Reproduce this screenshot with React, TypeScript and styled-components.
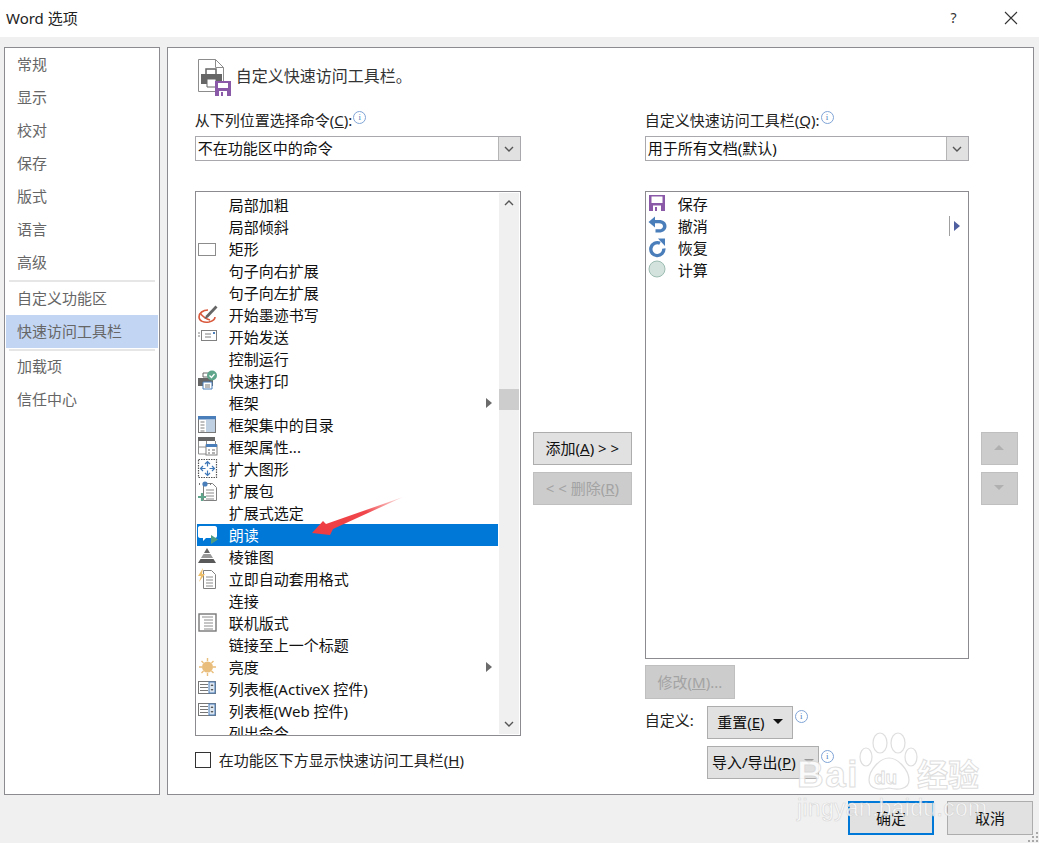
import React from "react";
import styled, { createGlobalStyle } from "styled-components";

const FONT = `"Noto Sans", "Noto Sans CJK SC", sans-serif`;

const GlobalStyle = createGlobalStyle`
  html, body {
    margin: 0;
    padding: 0;
    background: #f0f0f0;
  }
  * {
    box-sizing: border-box;
  }
`;

type IconName =
  | "rect" | "ink" | "send" | "quickprint" | "toc" | "frameprops" | "enlarge"
  | "pack" | "speak" | "pyramid" | "autoformat" | "online" | "sun" | "listbox"
  | "save" | "undo" | "redo" | "calc";

const Glyph: React.FC<{ name: IconName }> = ({ name }) => {
  switch (name) {
    case "rect":
      return <rect x="1.5" y="5.5" width="17" height="12" fill="#fff" stroke="#8c8c8c" />;
    case "ink":
      return (
        <>
          <path d="M11 6C6 6 2 9 2 13c0 4 5 6 10 5 4-1 6-3 6-5" fill="none" stroke="#d9593d" strokeWidth="1.6" />
          <path d="M3 9c3 4 6 6 10 7" fill="none" stroke="#d9593d" strokeWidth="1.4" />
          <path d="M9 11.500L18.500 1.500l2 2-9.500 10-3.500 1.500z" fill="#666" />
        </>
      );
    case "send":
      return (
        <>
          <rect x="4.5" y="4.5" width="15" height="10" fill="#fff" stroke="#808080" />
          <path d="M1 7h2M1 10h2M8 8h6M8 11h6" stroke="#808080" />
          <rect x="16" y="6" width="2" height="2" fill="#4a7ebb" />
        </>
      );
    case "quickprint":
      return (
        <>
          <path d="M6 3h8v4H6z" fill="#fff" stroke="#666" />
          <path d="M1 8h15v8H1z" fill="#666" />
          <path d="M6 12h9v7H6z" fill="#fff" stroke="#4a7ebb" />
          <path d="M8 15h5M8 17h5" stroke="#777" />
          <circle cx="15" cy="5.5" r="5" fill="#5fa58c" />
          <path d="M12.5 5.500l2 2 3-3.500" fill="none" stroke="#fff" strokeWidth="1.3" />
        </>
      );
    case "toc":
      return (
        <>
          <rect x="1.5" y="2.5" width="17" height="16" fill="#fff" stroke="#777" />
          <rect x="1" y="2" width="18" height="3.5" fill="#4a7ebb" />
          <rect x="9" y="6" width="9" height="12" fill="#bfd0e3" />
          <path d="M3.5 8h4M3.5 11h4M3.5 14h4M3.5 17h4" stroke="#7f7f7f" />
        </>
      );
    case "frameprops":
      return (
        <>
          <rect x="1" y="1" width="17" height="4" fill="#666" />
          <path d="M1.5 5v13h17V5M1.5 11h8M9.5 5v13" fill="#fff" stroke="#8c8c8c" />
          <rect x="9" y="9" width="11" height="10" fill="#fff" stroke="#808080" />
          <rect x="9" y="8" width="11" height="3" fill="#4a7ebb" />
          <path d="M11 14h2M15 14h3M11 17h2M15 17h3" stroke="#666" />
        </>
      );
    case "enlarge":
      return (
        <>
          <rect x="1.5" y="1.5" width="18" height="18" fill="#fff" stroke="#555" strokeDasharray="1.5 1" strokeWidth="1.2" />
          <path d="M10.5 3.500v5M8 6l2.500-2.500L13 6M10.500 17.500v-5M8 15l2.500 2.500L13 15M3.500 10.500h5M6 8l-2.500 2.500L6 13M17.500 10.500h-5M15 8l2.500 2.500L15 13" fill="none" stroke="#3f78b8" strokeWidth="1.2" />
        </>
      );
    case "pack":
      return (
        <>
          <path d="M6.5 3.5h9l4 4v13h-13z" fill="#fff" stroke="#808080" />
          <path d="M9 10h8M9 13h8M9 16h8M9 19h8" stroke="#8c8c8c" />
          <circle cx="8" cy="4" r="2.6" fill="#4a7ebb" />
          <path d="M2 4h1M13 4h1" stroke="#777" strokeWidth="2" />
          <path d="M5 13v8M1 17h8" stroke="#5fa58c" strokeWidth="2.2" />
        </>
      );
    case "speak":
      return (
        <>
          <path d="M1 4c0-1 .5-2 2-2h15c1 0 2 1 2 2v8c0 1-1 2-2 2H9l-3 3v-3H3c-1 0-2-1-2-2z" fill="#fff" />
          <path d="M14 11l7 4.500-7 4.500z" fill="#4f9c84" />
        </>
      );
    case "pyramid":
      return (
        <>
          <path d="M10 2l3 5H7z" fill="#666" />
          <path d="M6.5 8h7l2.500 4H4z" fill="#999" />
          <path d="M3.5 13h13l2.500 4H1z" fill="#595959" />
        </>
      );
    case "autoformat":
      return (
        <>
          <path d="M6.5 2.5h8l4 4v14h-12z" fill="#fff" stroke="#808080" />
          <path d="M9 9h7M9 12h7M9 15h7M9 18h7" stroke="#8c8c8c" />
          <path d="M6 0L1 8h3l-2 6 6-8H5z" fill="#edbe6a" />
        </>
      );
    case "online":
      return (
        <>
          <rect x="2" y="2" width="17" height="17" fill="#fff" stroke="#777" strokeWidth="1.4" />
          <path d="M5 5h11M7 8h9M7 11h9M7 14h9M7 17h9" stroke="#8c8c8c" />
        </>
      );
    case "sun":
      return (
        <>
          <circle cx="10.5" cy="11" r="5.5" fill="#e9bd7b" />
          <path d="M10.5 2v3M10.5 17v3M2 11h3M16 11h3M4.5 5l2 2M14.5 15l2 2M16.5 5l-2 2M6.5 15l-2 2" stroke="#e9bd7b" strokeWidth="1.4" />
        </>
      );
    case "listbox":
      return (
        <>
          <rect x="1.5" y="3.5" width="17" height="12" fill="#fff" stroke="#777" />
          <path d="M3 6.500h8M3 9.500h8M3 12.500h8" stroke="#777" />
          <rect x="12" y="4" width="6" height="11" fill="#dce6f1" stroke="#4a7ebb" />
          <path d="M13.5 8l1.500-2 1.500 2zM13.5 11l1.500 2 1.500-2z" fill="#555" />
        </>
      );
    case "save":
      return (
        <>
          <path d="M1 1h16v16H1z" fill="#8a5aa8" />
          <rect x="3.5" y="2.5" width="11" height="6.5" fill="#fff" />
          <rect x="5" y="11.5" width="8" height="5.5" fill="#fff" />
          <rect x="7" y="13" width="2" height="4" fill="#8a5aa8" />
        </>
      );
    case "undo":
      return (
        <path d="M0.5 6l6.500-5.500v3.500h4c4.500 0 7.500 2.500 7.500 6.200s-3 6.300-7.500 6.300H7.500v-3.200H11c2.400 0 4-1.100 4-3.100S13.400 7.200 11 7.200H7V11.500z" fill="#4a7ebb" />
      );
    case "redo":
      return (
        <>
          <path d="M12 5.200A6.500 6.500 0 1 0 15.800 10.500" fill="none" stroke="#4a7ebb" strokeWidth="3.400" />
          <path d="M10 0.500l7 0v7.500z" fill="#4a7ebb" />
        </>
      );
    case "calc":
      return <circle cx="9" cy="9" r="8" fill="#d3e2dc" stroke="#9dbdb2" />;
  }
};

const Shell = styled.div`
  position: relative;
  width: 1039px;
  height: 843px;
  overflow: hidden;
  display: flex;
  flex-direction: column;
  background: #f0f0f0;
  color: #111;
  font-family: ${FONT};
  font-size: 15px;
`;

const TitleBar = styled.div`
  height: 37px;
  flex: none;
  display: flex;
  align-items: center;
  background: #fff;
  padding: 0 0 2px 6px;
`;

const TitleText = styled.div`
  flex: 1;
  font-size: 15px;
  color: #222;
`;

const TitleButton = styled.div`
  width: 57px;
  font-size: 14px;
  display: flex;
  justify-content: center;
  color: #333;
`;

const Body = styled.div`
  height: 758px;
  flex: none;
  display: flex;
  gap: 7px;
  padding: 10px 5px 0 4px;
`;

const Nav = styled.nav`
  width: 156px;
  height: 748px;
  background: #fff;
  border: 1px solid #8b8b90;
  padding: 0 1px;
  color: #666;
`;

const NavItem = styled.div<{ $selected?: boolean }>`
  height: 33px;
  display: flex;
  align-items: center;
  padding: 0 0 2px 11px;
  background: ${(p) => (p.$selected ? "#c2d5f2" : "transparent")};
`;

const NavRule = styled.div<{ $tight?: boolean }>`
  height: 2px;
  margin: ${(p) => (p.$tight ? "1px 3px -1px" : "1px 3px 0")};
  background: #e6e6e6;
`;

const Main = styled.main`
  width: 868px;
  height: 748px;
  background: #fff;
  border: 1px solid #8b8b90;
  padding: 10px 0 0 27px;
`;

const Header = styled.div`
  height: 38px;
  display: flex;
  align-items: center;
  gap: 5px;
  padding-left: 2px;
  font-size: 16px;
  color: #333;
`;

const HeaderText = styled.span`
  padding-bottom: 5px;
`;

const Columns = styled.div`
  display: grid;
  grid-template-columns: 326px 100px 324px 37px;
  column-gap: 12px;
  margin-top: 14px;
`;

const Column = styled.div`
  display: flex;
  flex-direction: column;
`;

const ButtonColumn = styled.div`
  display: flex;
  flex-direction: column;
  gap: 7px;
  padding-top: 322px;
`;

const FieldLabel = styled.div`
  height: 26px;
  display: flex;
  align-items: flex-start;
  line-height: 20px;
  color: #222;
`;

const Info = styled.span`
  display: block;
  flex: none;
  width: 13px;
  height: 13px;
  margin-left: 1px;
  margin-top: 1px;
  border: 1px solid #7fa4d6;
  border-radius: 50%;
  color: #4f7fc0;
  font-size: 9px;
  line-height: 11px;
  text-align: center;
  font-family: "Liberation Serif", serif;
`;

const Select = styled.div`
  height: 25px;
  display: flex;
  border: 1.5px solid #a9a9ad;
  background: #fff;
  padding-left: 2px;
  line-height: 22px;
`;

const SelectText = styled.div`
  flex: 1;
`;

const SelectArrow = styled.div`
  width: 22px;
  background: #e1e1e1;
  border-left: 1px solid #b5b5b5;
  display: flex;
  align-items: center;
  justify-content: center;
`;

const ListBox = styled.div<{ $h: number }>`
  height: ${(p) => p.$h}px;
  margin-top: 30px;
  border: 1px solid #8b8b90;
  background: #fff;
  display: flex;
  overflow: hidden;
  position: relative;
`;

const Rows = styled.div<{ $top: number }>`
  flex: 1;
  padding: ${(p) => p.$top}px 1px 0 1px;
  overflow: hidden;
`;

const Row = styled.div<{ $selected?: boolean; $gap?: number }>`
  height: 22px;
  display: flex;
  align-items: center;
  gap: ${(p) => p.$gap ?? 10}px;
  white-space: nowrap;
  background: ${(p) => (p.$selected ? "#0078d7" : "transparent")};
  color: ${(p) => (p.$selected ? "#fff" : "#111")};
`;

const RowIcon = styled.span`
  flex: none;
  width: 22px;
  height: 22px;
  display: flex;
  align-items: center;
  justify-content: center;
`;

const RowLabel = styled.span`
  flex: 1;
  padding-bottom: 2px;
`;

const Caret = styled.span`
  width: 0;
  height: 0;
  margin-right: 6px;
  border-left: 6px solid #6b6b6b;
  border-top: 5px solid transparent;
  border-bottom: 5px solid transparent;
`;

const Scrollbar = styled.div`
  width: 20px;
  margin: 1px 1px 1px 0;
  background: #f0f0f0;
  display: flex;
  flex-direction: column;
  justify-content: space-between;
`;

const ScrollEnd = styled.div`
  height: 20px;
  display: flex;
  align-items: center;
  justify-content: center;
  color: #555;
`;

const ScrollTrack = styled.div`
  flex: 1;
`;

const ScrollThumb = styled.div`
  height: 21px;
  margin-top: 176px;
  background: #cdcdcd;
`;

const SplitHandle = styled.div`
  position: absolute;
  top: 24px;
  left: 303px;
  width: 14px;
  height: 20px;
  border-left: 1px solid #a0a0a0;
  display: flex;
  align-items: center;
  padding-left: 4px;
`;

const SplitCaret = styled.span`
  border-left: 6px solid #4f5f9f;
  border-top: 5px solid transparent;
  border-bottom: 5px solid transparent;
`;

const CheckRow = styled.label`
  display: flex;
  align-items: center;
  gap: 8px;
  margin-top: 14px;
  height: 20px;
  color: #222;
`;

const CheckText = styled.span`
  padding-bottom: 2px;
`;

const CheckBox = styled.span`
  width: 16px;
  height: 16px;
  border: 1px solid #333;
  background: #fff;
`;

const Button = styled.div<{ $disabled?: boolean; $w?: number; $h?: number; $primary?: boolean }>`
  width: ${(p) => p.$w ?? 99}px;
  height: ${(p) => p.$h ?? 33}px;
  flex: none;
  display: flex;
  align-items: center;
  justify-content: center;
  gap: 8px;
  padding-bottom: 2px;
  white-space: nowrap;
  background: ${(p) => (p.$disabled ? "#cccccc" : "#e1e1e1")};
  border: ${(p) =>
    p.$primary ? "2px solid #0078d7" : `1.5px solid ${p.$disabled ? "#bfbfbf" : "#adadad"}`};
  color: ${(p) => (p.$disabled ? "#a3a3a3" : "#111")};
`;

const Tri = styled.span<{ $up?: boolean; $c?: string }>`
  width: 0;
  height: 0;
  border-left: 5px solid transparent;
  border-right: 5px solid transparent;
  ${(p) => (p.$up ? "border-bottom" : "border-top")}: 5px solid ${(p) => p.$c ?? "#222"};
`;

const CustomRow = styled.div<{ $top?: number }>`
  display: flex;
  align-items: flex-start;
  margin-top: ${(p) => p.$top ?? 7}px;
`;

const CustomLabel = styled.div`
  width: 62px;
  padding-top: 3px;
  color: #222;
`;

const InfoSlot = styled.div`
  padding: 3px 0 0 1px;
`;

const Footer = styled.div`
  flex: 1;
  display: flex;
  justify-content: flex-end;
  gap: 13px;
  padding: 6px 6px 0 0;
`;

const Grip = styled.svg`
  position: absolute;
  right: 0;
  bottom: 0;
`;

const Pointer = styled.svg`
  position: absolute;
  left: 305px;
  top: 492px;
  pointer-events: none;
`;

const Watermark = styled.div`
  position: absolute;
  left: 795px;
  top: 728px;
  width: 195px;
  height: 95px;
  pointer-events: none;
  opacity: 0.85;
`;

const WatermarkSvg = styled.svg`
  position: absolute;
  left: 60px;
  top: 0;
`;

const WatermarkBai = styled.div`
  position: absolute;
  left: 2px;
  top: 26px;
  font: bold 37px "Liberation Sans", sans-serif;
  letter-spacing: 1.5px;
  color: #fff;
  -webkit-text-stroke: 1px #d9d9d9;
`;

const WatermarkCn = styled.div`
  position: absolute;
  left: 122px;
  top: 22px;
  font: bold 31px "Noto Sans CJK SC", sans-serif;
  color: #fff;
  -webkit-text-stroke: 1px #d9d9d9;
`;

const WatermarkUrl = styled.div`
  position: absolute;
  left: 2px;
  top: 67px;
  font: 23px "Liberation Sans", sans-serif;
  letter-spacing: 0.3px;
  color: #fff;
  -webkit-text-stroke: 0.7px #d6d6d6;
`;

const Chevron: React.FC<{ up?: boolean }> = ({ up }) => (
  <svg width="12" height="8" viewBox="0 0 12 8">
    <path d={up ? "M2 6l4-4 4 4" : "M2 2l4 4 4-4"} fill="none" stroke="#555" strokeWidth="1.4" />
  </svg>
);

type Cmd = { label: string; icon?: IconName; sub?: boolean; selected?: boolean };

const commands: Cmd[] = [
  { label: "局部加粗" },
  { label: "局部倾斜" },
  { label: "矩形", icon: "rect" },
  { label: "句子向右扩展" },
  { label: "句子向左扩展" },
  { label: "开始墨迹书写", icon: "ink" },
  { label: "开始发送", icon: "send" },
  { label: "控制运行" },
  { label: "快速打印", icon: "quickprint" },
  { label: "框架", sub: true },
  { label: "框架集中的目录", icon: "toc" },
  { label: "框架属性...", icon: "frameprops" },
  { label: "扩大图形", icon: "enlarge" },
  { label: "扩展包", icon: "pack" },
  { label: "扩展式选定" },
  { label: "朗读", icon: "speak", selected: true },
  { label: "棱锥图", icon: "pyramid" },
  { label: "立即自动套用格式", icon: "autoformat" },
  { label: "连接" },
  { label: "联机版式", icon: "online" },
  { label: "链接至上一个标题" },
  { label: "亮度", icon: "sun", sub: true },
  { label: "列表框(ActiveX 控件)", icon: "listbox" },
  { label: "列表框(Web 控件)", icon: "listbox" },
  { label: "列出命令" },
];

const toolbar: { label: string; icon: IconName }[] = [
  { label: "保存", icon: "save" },
  { label: "撤消", icon: "undo" },
  { label: "恢复", icon: "redo" },
  { label: "计算", icon: "calc" },
];

export default function App() {
  return (
    <Shell>
      <GlobalStyle />
      <TitleBar>
        <TitleText>Word 选项</TitleText>
        <TitleButton>?</TitleButton>
        <TitleButton>
          <svg width="14" height="14" viewBox="0 0 14 14">
            <path d="M1 1l12 12M13 1L1 13" stroke="#333" strokeWidth="1.1" />
          </svg>
        </TitleButton>
      </TitleBar>

      <Body>
        <Nav>
          {["常规", "显示", "校对", "保存", "版式", "语言", "高级"].map((n) => (
            <NavItem key={n}>{n}</NavItem>
          ))}
          <NavRule />
          <NavItem>自定义功能区</NavItem>
          <NavItem $selected>快速访问工具栏</NavItem>
          <NavRule $tight />
          <NavItem>加载项</NavItem>
          <NavItem>信任中心</NavItem>
        </Nav>

        <Main>
          <Header>
            <svg width="34" height="38" viewBox="0 0 34 38">
              <path d="M1.5 1.5h17l8 8v24h-25z" fill="#fff" stroke="#8c8c8c" />
              <path d="M18.5 1.5v8h8" fill="none" stroke="#8c8c8c" />
              <path d="M9 11h10v6H9z" fill="#fff" stroke="#666" strokeWidth="1.5" />
              <path d="M4 16h21v10H4z" fill="#666" />
              <path d="M10 21h9v8h-9z" fill="#fff" stroke="#666" />
              <path d="M18 23h16v15H18z" fill="#8a5aa8" />
              <rect x="21" y="25" width="10" height="5" fill="#fff" />
              <rect x="22" y="33" width="8" height="5" fill="#fff" />
              <rect x="24" y="34" width="2" height="4" fill="#8a5aa8" />
            </svg>
            <HeaderText>自定义快速访问工具栏。</HeaderText>
          </Header>

          <Columns>
            <Column>
              <FieldLabel>
                从下列位置选择命令(<u>C</u>):<Info>i</Info>
              </FieldLabel>
              <Select>
                <SelectText>不在功能区中的命令</SelectText>
                <SelectArrow>
                  <Chevron />
                </SelectArrow>
              </Select>
              <ListBox $h={545}>
                <Rows $top={2}>
                  {commands.map((c) => (
                    <Row key={c.label} $selected={c.selected}>
                      <RowIcon>
                        {c.icon && (
                          <svg width="22" height="22" viewBox="0 0 22 22">
                            <Glyph name={c.icon} />
                          </svg>
                        )}
                      </RowIcon>
                      <RowLabel>{c.label}</RowLabel>
                      {c.sub && <Caret />}
                    </Row>
                  ))}
                </Rows>
                <Scrollbar>
                  <ScrollEnd>
                    <Chevron up />
                  </ScrollEnd>
                  <ScrollTrack>
                    <ScrollThumb />
                  </ScrollTrack>
                  <ScrollEnd>
                    <Chevron />
                  </ScrollEnd>
                </Scrollbar>
              </ListBox>
              <CheckRow>
                <CheckBox />
                <CheckText>
                  在功能区下方显示快速访问工具栏(<u>H</u>)
                </CheckText>
              </CheckRow>
            </Column>

            <ButtonColumn>
              <Button>
                <span>
                  添加(<u>A</u>) &gt; &gt;
                </span>
              </Button>
              <Button $disabled>
                <span>
                  &lt; &lt; 删除(<u>R</u>)
                </span>
              </Button>
            </ButtonColumn>

            <Column>
              <FieldLabel>
                自定义快速访问工具栏(<u>Q</u>):<Info>i</Info>
              </FieldLabel>
              <Select>
                <SelectText>用于所有文档(默认)</SelectText>
                <SelectArrow>
                  <Chevron />
                </SelectArrow>
              </Select>
              <ListBox $h={468}>
                <Rows $top={1}>
                  {toolbar.map((t) => (
                    <Row key={t.label} $gap={9}>
                      <RowIcon>
                        <svg width="20" height="20" viewBox="0 0 20 20">
                          <Glyph name={t.icon} />
                        </svg>
                      </RowIcon>
                      <RowLabel>{t.label}</RowLabel>
                    </Row>
                  ))}
                </Rows>
                <SplitHandle>
                  <SplitCaret />
                </SplitHandle>
              </ListBox>
              <CustomRow $top={6}>
                <Button $disabled $w={90} $h={34}>
                  <span>
                    修改(<u>M</u>)...
                  </span>
                </Button>
              </CustomRow>
              <CustomRow>
                <CustomLabel>自定义:</CustomLabel>
                <Button $w={86}>
                  <span>
                    重置(<u>E</u>)
                  </span>
                  <Tri $c="#111" />
                </Button>
                <InfoSlot>
                  <Info>i</Info>
                </InfoSlot>
              </CustomRow>
              <CustomRow>
                <CustomLabel />
                <Button $w={112}>
                  <span>
                    导入/导出(<u>P</u>)
                  </span>
                  <Tri $c="#999" />
                </Button>
                <InfoSlot>
                  <Info>i</Info>
                </InfoSlot>
              </CustomRow>
            </Column>

            <ButtonColumn>
              <Button $disabled $w={37}>
                <Tri $up $c="#b0b0b0" />
              </Button>
              <Button $disabled $w={37}>
                <Tri $c="#b0b0b0" />
              </Button>
            </ButtonColumn>
          </Columns>
        </Main>
      </Body>

      <Footer>
        <Button $primary $w={86} $h={34}>
          确定
        </Button>
        <Button $w={86} $h={34}>
          取消
        </Button>
      </Footer>

      <Grip width="12" height="12" viewBox="0 0 12 12">
        <path d="M9 1h2v2H9zM5 5h2v2H5zM9 5h2v2H9zM1 9h2v2H1zM5 9h2v2H5zM9 9h2v2H9z" fill="#a8a8a8" />
      </Grip>

      <Pointer width="100" height="48" viewBox="0 0 100 48">
        <defs>
          <linearGradient id="tail" x1="1" y1="0" x2="0" y2="1">
            <stop offset="0" stopColor="#f36a6a" stopOpacity="0.2" />
            <stop offset="0.4" stopColor="#f0474c" />
            <stop offset="1" stopColor="#ee3b40" />
          </linearGradient>
        </defs>
        <polygon points="98,5 21,32 18,29 7,41 25,43 28,37" fill="url(#tail)" />
      </Pointer>

      <Watermark>
        <WatermarkSvg width="70" height="70" viewBox="0 0 70 70">
          <g fill="#fff" fillOpacity="0.75" stroke="#d9d9d9" strokeWidth="1.2">
            <ellipse cx="25" cy="15" rx="7" ry="10" />
            <ellipse cx="43" cy="15" rx="7" ry="10" />
            <ellipse cx="11" cy="29" rx="6" ry="9" />
            <ellipse cx="56" cy="29" rx="6" ry="9" />
            <path d="M34 30c9 0 20 12 20 22 0 10-12 10-20 8-8 2-20 2-20-8 0-10 11-22 20-22z" />
          </g>
          <text x="19" y="56" fontFamily="Liberation Sans, sans-serif" fontSize="19" fontWeight="700" fill="#fff" stroke="#d4d4d4" strokeWidth="0.8">
            du
          </text>
        </WatermarkSvg>
        <WatermarkBai>Bai</WatermarkBai>
        <WatermarkCn>经验</WatermarkCn>
        <WatermarkUrl>jingyan.baidu.com</WatermarkUrl>
      </Watermark>
    </Shell>
  );
}
